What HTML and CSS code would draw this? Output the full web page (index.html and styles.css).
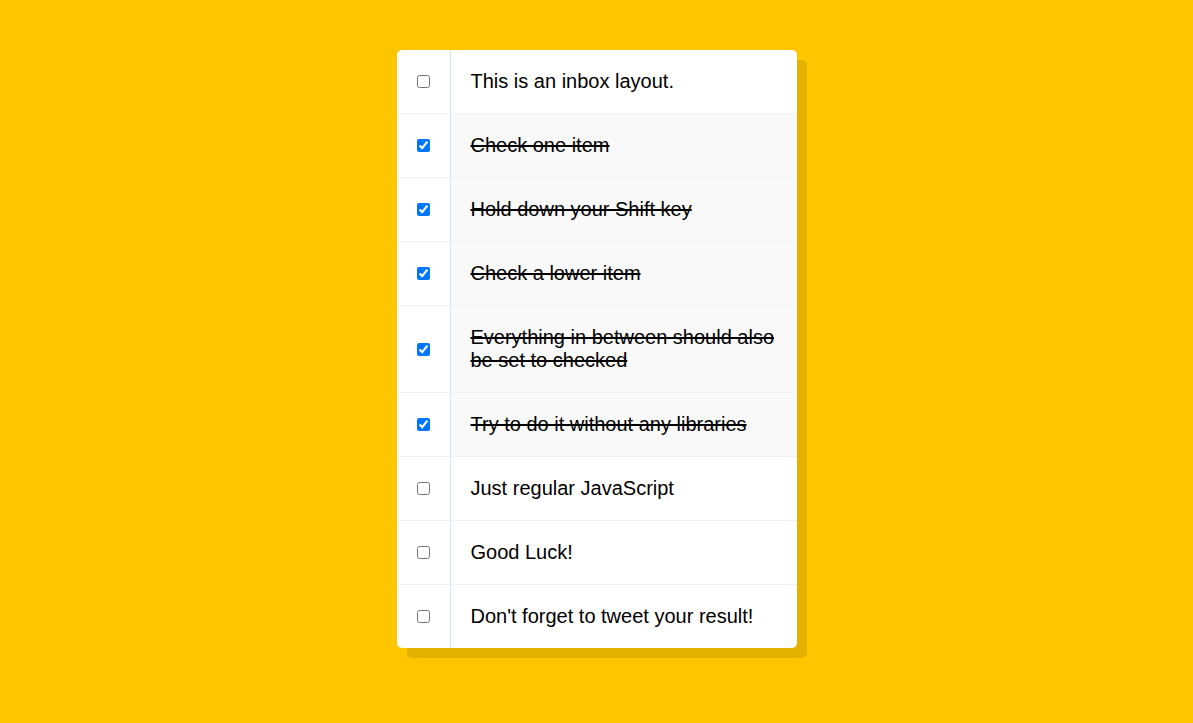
FILE: index.html
```html
<!DOCTYPE html>
<html lang="en">
<head>
  <meta charset="UTF-8">
  <meta name="viewport" content="width=device-width, initial-scale=1">
  <title>Hold Shift to Check Multiple Checkboxes</title>
  <link rel="stylesheet" href="styles.css">
</head>
<body>
  <div class="inbox">
    <div class="item"><input type="checkbox" id="item-1"><label for="item-1">This is an inbox layout.</label></div>
    <div class="item"><input type="checkbox" id="item-2" checked><label for="item-2">Check one item</label></div>
    <div class="item"><input type="checkbox" id="item-3" checked><label for="item-3">Hold down your Shift key</label></div>
    <div class="item"><input type="checkbox" id="item-4" checked><label for="item-4">Check a lower item</label></div>
    <div class="item"><input type="checkbox" id="item-5" checked><label for="item-5">Everything in between should also be set to checked</label></div>
    <div class="item"><input type="checkbox" id="item-6" checked><label for="item-6">Try to do it without any libraries</label></div>
    <div class="item"><input type="checkbox" id="item-7"><label for="item-7">Just regular JavaScript</label></div>
    <div class="item"><input type="checkbox" id="item-8"><label for="item-8">Good Luck!</label></div>
    <div class="item"><input type="checkbox" id="item-9"><label for="item-9">Don't forget to tweet your result!</label></div>
  </div>
</body>
</html>
```

FILE: styles.css
```css
html {
  font-family: "Liberation Sans", Arial, sans-serif;
  background: #ffc600;
}

body {
  margin: 0;
}

.inbox {
  max-width: 400px;
  margin: 50px auto;
  background: white;
  border-radius: 5px;
  box-shadow: 10px 10px 0 rgba(0, 0, 0, 0.1);
}

.item {
  display: flex;
  align-items: center;
  border-bottom: 1px solid #f1f1f1;
}

.item:last-child {
  border-bottom: 0;
}

.item input {
  margin: 20px;
}

.item label {
  flex: 1;
  padding: 20px;
  border-left: 1px solid #d1e2ff;
  font-size: 20px;
  line-height: 23px;
}

.item input:checked + label {
  background: #f9f9f9;
  text-decoration: line-through;
}
```
